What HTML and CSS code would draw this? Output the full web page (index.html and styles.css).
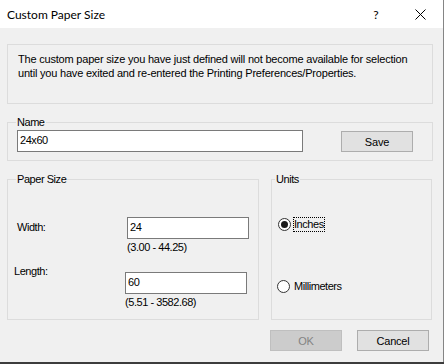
FILE: index.html
```html
<!DOCTYPE html>
<html>
<head>
<meta charset="utf-8">
<link rel="stylesheet" href="styles.css">
</head>
<body>
<div class="screen">
  <div class="window">
    <div class="titlebar">
      <span class="title">Custom Paper Size</span>
      <span class="help">?</span>
      <span class="close"><svg width="11" height="11" viewBox="0 0 11 11"><path d="M0.5 0.5L10.5 10.5M10.5 0.5L0.5 10.5" stroke="#000" stroke-width="1" fill="none"/></svg></span>
    </div>
    <div class="content">
      <div class="info">The custom paper size you have just defined will not become available for selection<br>until you have exited and re-entered the Printing Preferences/Properties.</div>
      <div class="group name-group">
        <div class="group-label">Name</div>
        <div class="name-row">
          <input class="textbox name-input" type="text" value="24x60">
          <button class="btn save-btn">Save</button>
        </div>
      </div>
      <div class="groups-row">
        <div class="group paper-group">
          <div class="group-label">Paper Size</div>
          <div class="field field-width">
            <span class="field-label">Width:</span>
            <div class="field-col">
              <input class="textbox size-input" type="text" value="24">
              <span class="range">(3.00 - 44.25)</span>
            </div>
          </div>
          <div class="field field-length">
            <span class="field-label">Length:</span>
            <div class="field-col">
              <input class="textbox size-input" type="text" value="60">
              <span class="range">(5.51 - 3582.68)</span>
            </div>
          </div>
        </div>
        <div class="group units-group">
          <div class="group-label">Units</div>
          <div class="radio-row radio-inches">
            <span class="radio checked"></span>
            <span class="radio-text focused">Inches</span>
          </div>
          <div class="radio-row radio-mm">
            <span class="radio"></span>
            <span class="radio-text">Millimeters</span>
          </div>
        </div>
      </div>
      <div class="actions">
        <button class="btn disabled">OK</button>
        <button class="btn">Cancel</button>
      </div>
    </div>
  </div>
  <div class="taskbar"></div>
</div>
</body>
</html>
```
FILE: styles.css
```css
html, body {
  margin: 0;
  padding: 0;
}
.screen {
  width: 444px;
  height: 364px;
  overflow: hidden;
}
.window {
  width: 444px;
  height: 362px;
  box-sizing: border-box;
  background: #f0f0f0;
  border-right: 1px solid #858585;
  font-family: "Liberation Sans", Arial, sans-serif;
  font-size: 11px;
  letter-spacing: -0.45px;
  color: #000;
}
.taskbar {
  height: 2px;
  background: #3c3c3c;
}
.titlebar {
  height: 28px;
  background: #fff;
  display: flex;
  align-items: center;
  letter-spacing: 0;
}
.title {
  font-family: Lato, "Noto Sans", sans-serif;
  font-size: 12px;
  padding-left: 7px;
  color: #000;
}
.help {
  margin-left: auto;
  font-family: Lato, "Noto Sans", sans-serif;
  font-size: 12px;
  width: 12px;
  text-align: center;
}
.close {
  display: flex;
  margin-left: 33px;
  margin-right: 17px;
}
.content {
  padding: 0 10px 0 7px;
}
.info {
  margin-top: 16px;
  height: 60px;
  box-sizing: border-box;
  border: 1px solid #dcdcdc;
  padding: 7px 10px 0 10px;
  line-height: 14px;
  letter-spacing: -0.2px;
  white-space: nowrap;
}
.group {
  border: 1px solid #dcdcdc;
  box-sizing: border-box;
}
.group-label {
  width: fit-content;
  margin-top: -7px;
  margin-left: 8px;
  padding: 0 1px;
  line-height: 13px;
  background: #f0f0f0;
}
.name-group {
  margin-top: 18px;
  height: 39px;
}
.name-row {
  display: flex;
  align-items: flex-start;
  margin-top: 1px;
  padding-left: 9px;
}
.textbox {
  box-sizing: border-box;
  height: 22px;
  border: 1px solid #7a7a7a;
  background: #fff;
  padding: 0 2px 2px 2px;
  margin: 0;
  font-family: "Liberation Sans", Arial, sans-serif;
  font-size: 11px;
  letter-spacing: -0.45px;
  color: #000;
  outline: none;
}
.name-input {
  width: 286px;
}
.btn {
  box-sizing: border-box;
  width: 72px;
  height: 21px;
  margin: 0;
  padding: 0;
  border: 1px solid #adadad;
  background: #e1e1e1;
  font-family: "Liberation Sans", Arial, sans-serif;
  font-size: 11px;
  letter-spacing: -0.2px;
  color: #000;
}
.btn.disabled {
  background: #cccccc;
  border-color: #bfbfbf;
  color: #838383;
}
.save-btn {
  margin-left: 38px;
  margin-top: 1px;
}
.groups-row {
  display: flex;
  gap: 12px;
  margin-top: 18px;
}
.paper-group {
  width: 252px;
  height: 141px;
}
.units-group {
  width: 161px;
  height: 141px;
}
.field {
  display: flex;
  align-items: flex-start;
}
.field-label {
  line-height: 13px;
}
.field-col {
  display: flex;
  flex-direction: column;
  align-items: flex-start;
}
.size-input {
  width: 122px;
}
.range {
  margin-top: 2px;
  line-height: 13px;
}
.field-width {
  margin-top: 31px;
  padding-left: 9px;
}
.field-width .field-label {
  width: 110px;
  margin-top: 4px;
}
.field-length {
  margin-top: 11px;
  padding-left: 6px;
}
.field-length .field-label {
  width: 111px;
}
.field-length .field-col {
  margin-top: 7px;
}
.units-group .group-label {
  margin-left: 3px;
}
.radio-row {
  display: flex;
  align-items: center;
  height: 15px;
}
.radio {
  box-sizing: border-box;
  width: 13px;
  height: 13px;
  border: 1px solid #333;
  border-radius: 50%;
  background: #fff;
  display: flex;
  align-items: center;
  justify-content: center;
}
.radio.checked::after {
  content: "";
  width: 7px;
  height: 7px;
  border-radius: 50%;
  background: #1a1a1a;
}
.radio-text {
  border: 1px dotted transparent;
  line-height: 13px;
}
.radio-text.focused {
  border-color: #000;
}
.radio-inches {
  margin-top: 31px;
}
.radio-inches .radio {
  margin-left: 6px;
}
.radio-inches .radio-text {
  margin-left: 2px;
}
.radio-mm {
  margin-top: 47px;
}
.radio-mm .radio {
  margin-left: 5px;
}
.radio-mm .radio-text {
  margin-left: 3px;
}
.actions {
  display: flex;
  justify-content: flex-end;
  gap: 15px;
  margin-top: 10px;
  margin-right: 4px;
}
```
